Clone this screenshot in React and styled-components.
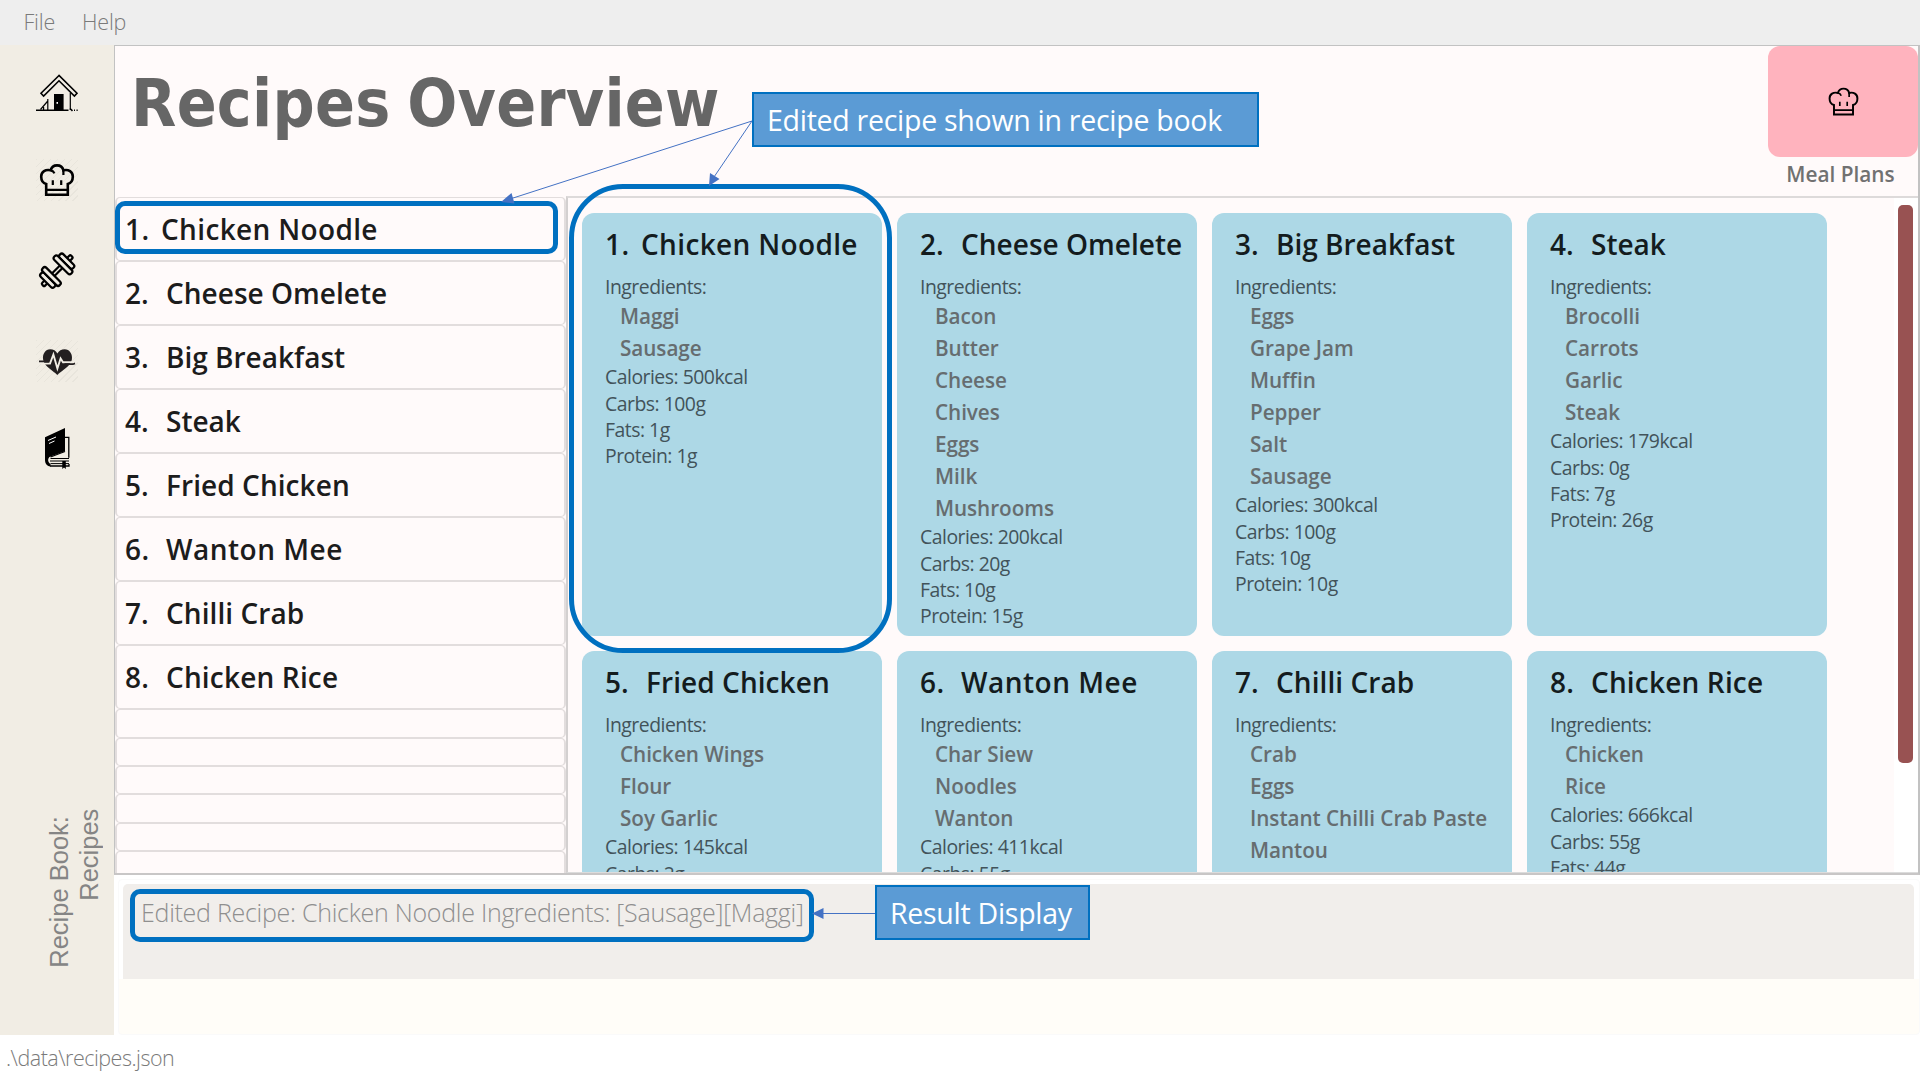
import React from "react";
import styled, { createGlobalStyle } from "styled-components";

const GlobalStyle = createGlobalStyle`
  * { box-sizing: border-box; }
  html, body { margin: 0; padding: 0; background: #fff; overflow: hidden; }
  body { font-family: "Open Sans", "Noto Sans", sans-serif; }
`;

const Window = styled.div`
  position: relative;
  display: flex;
  flex-direction: column;
  width: 1920px;
  height: 1080px;
  overflow: hidden;
  background: #fff;
`;

const MenuBar = styled.nav`
  display: flex;
  gap: 27px;
  height: 45px;
  padding-left: 23.5px;
  background: #eeeeee;
`;

const MenuItem = styled.span`
  font-size: 21.5px;
  font-weight: 300;
  line-height: 44px;
  letter-spacing: -0.2px;
  color: #7a7a7a;
`;

const Workspace = styled.div`
  display: flex;
  height: 990px;
`;

const Sidebar = styled.aside`
  display: flex;
  flex-direction: column;
  justify-content: space-between;
  width: 114px;
  padding: 24px 0 67px;
  background: #f1ede4;
`;

const NavIcons = styled.div`
  display: flex;
  flex-direction: column;
  gap: 48.3px;
  padding-left: 36px;
`;

const IconTile = styled.span`
  display: block;
  width: ${(p) => p.$size}px;
  height: ${(p) => p.$size}px;
  background: ${(p) =>
    p.$hatched
      ? "repeating-linear-gradient(135deg, rgba(0,0,0,0.035) 0 1px, transparent 1px 5px)"
      : "none"};

  svg {
    display: block;
    width: 100%;
    height: 100%;
    overflow: visible;
  }
`;

const SideCaption = styled.div`
  align-self: flex-start;
  margin-left: 44px;
  writing-mode: vertical-rl;
  transform: rotate(180deg);
  font-family: "Liberation Sans", Arial, sans-serif;
  font-size: 25.5px;
  line-height: 30px;
  text-align: right;
  white-space: pre;
  color: #858585;
`;

const Main = styled.main`
  display: flex;
  flex-direction: column;
  width: 1806px;
`;

const BookPanel = styled.section`
  display: flex;
  flex-direction: column;
  height: 830px;
  border: 1px solid #c2c2c2;
  border-right-width: 2px;
  border-bottom: 2px solid #c8c6c6;
  background: #fffafa;
`;

const Header = styled.header`
  display: flex;
  justify-content: space-between;
  height: 150px;
  padding-left: 16px;
`;

const Title = styled.h1`
  margin: 0;
  font-family: "DejaVu Sans Condensed", "DejaVu Sans", sans-serif;
  font-stretch: condensed;
  font-size: 65.5px;
  font-weight: 700;
  line-height: 114px;
  letter-spacing: 0.25px;
  word-spacing: -4px;
  color: #666;
`;

const PlansColumn = styled.div`
  display: flex;
  flex-direction: column;
  align-items: center;
  width: 150px;
`;

const PlansButton = styled.button`
  display: flex;
  align-items: center;
  justify-content: center;
  width: 150px;
  height: 111px;
  padding: 0;
  border: 0;
  border-radius: 12px;
  background: #ffb3be;
`;

const PlansLabel = styled.span`
  padding-right: 5px;
  font-size: 20.8px;
  font-weight: 600;
  line-height: 34px;
  color: #717171;
`;

const Columns = styled.div`
  display: flex;
  flex: 1;
  min-height: 0;
`;

const RecipeList = styled.div`
  width: 451px;
  height: 100%;
  padding-top: 0.5px;
  overflow: hidden;
`;

const ListCell = styled.div`
  display: flex;
  height: ${(p) => (p.$empty ? 28.4 : 64.1)}px;
  padding-left: 8px;
  border: 1px solid #e2dddd;
  border-width: 1.5px 2px;
  border-radius: 5px;
  font-size: 28px;
  font-weight: 600;
  line-height: 62.6px;
  letter-spacing: ${(p) => p.$tracking || 0}px;
  white-space: pre;
  color: #1c1c1c;
`;

const Index = styled.span`
  width: ${(p) => p.$width}px;
`;

const CardArea = styled.div`
  display: flex;
  flex: 1;
  justify-content: space-between;
  border-top: 2px solid #dddada;
  border-left: 2px solid #d3d0d0;
  border-bottom: 1px solid #dcdcdc;
  overflow: hidden;
`;

const CardGrid = styled.div`
  display: grid;
  grid-template-columns: repeat(4, 300px);
  grid-auto-rows: 422.5px;
  gap: 15.5px 15px;
  padding: 15px 0 0 14px;
`;

const Card = styled.article`
  padding: 11.4px 0 0 23px;
  border-radius: 12px;
  background: #add8e6;
  overflow: hidden;
  white-space: nowrap;
`;

const CardTitle = styled.h2`
  display: flex;
  margin: 0 0 10px;
  font-size: 28px;
  font-weight: 600;
  line-height: 40px;
  letter-spacing: ${(p) => p.$tracking}px;
  color: #141c1e;
`;

const Fact = styled.div`
  font-size: 19.4px;
  line-height: 26.1px;
  letter-spacing: -0.5px;
  color: #42535a;
`;

const Ingredient = styled.div`
  padding-left: 15px;
  font-size: 20.7px;
  font-weight: 600;
  line-height: 32px;
  letter-spacing: -0.05px;
  color: #666d70;
`;

const ScrollTrack = styled.div`
  width: 24px;
  padding: 7px 0 0 4px;
  background: #fff;
`;

const ScrollThumb = styled.div`
  width: 15px;
  height: 558px;
  border-radius: 5px;
  background: #985252;
`;

const ResultPanel = styled.section`
  height: 160px;
  padding: 4px 0 0 4px;
  background: #fff;
`;

const ResultFrame = styled.div`
  height: 156px;
  padding: 4px 5px 0 4px;
  border: 1px solid #fafafa;
  border-radius: 4px;
  background: linear-gradient(#fff 0 99px, #fffdf8 99px);
`;

const ResultBox = styled.div`
  height: 95px;
  padding: 10px 0 0 18px;
  border-radius: 5px 5px 0 0;
  background: #f1eeeb;
  font-size: 25px;
  font-weight: 300;
  line-height: 36px;
  letter-spacing: -0.27px;
  color: #8f8f8f;
`;

const StatusBar = styled.footer`
  height: 45px;
  padding-left: 6px;
  font-size: 21.5px;
  font-weight: 300;
  line-height: 46px;
  letter-spacing: -0.5px;
  color: #7a7a7a;
`;

const Overlay = styled.div`
  position: absolute;
  inset: 0;
  pointer-events: none;

  > svg {
    position: absolute;
    inset: 0;
  }
`;

const Outline = styled.div`
  position: absolute;
  left: ${(p) => p.$x}px;
  top: ${(p) => p.$y}px;
  width: ${(p) => p.$w}px;
  height: ${(p) => p.$h}px;
  border: 5px solid #0070c0;
  border-radius: ${(p) => p.$r}px;
`;

const Callout = styled.div`
  position: absolute;
  left: ${(p) => p.$x}px;
  top: ${(p) => p.$y}px;
  width: ${(p) => p.$w}px;
  height: 55px;
  padding-left: 13px;
  border: 2px solid #0070c0;
  background: #5b9bd5;
  font-size: 28.5px;
  line-height: 52px;
  letter-spacing: -0.27px;
  white-space: nowrap;
  color: #fff;
`;

const HouseIcon = () => (
  <svg viewBox="0 0 42 42" fill="none" stroke="#000" strokeWidth="1.6">
    <path d="M23 6.5 L5 24.3 L7.6 27 L23 11.8 L38.4 27 L41 24.3 Z" />
    <path d="M11.8 30 V41 M4.5 40.5 L11.8 32 M7.6 38 V41 M34.3 24 V41" strokeWidth="1.2" />
    <path d="M0 41.3 H32.5 M34 39.5 L36.5 41.8 M38 41.3 h1 M40.5 41.3 h1.2" />
    <rect x="18" y="25" width="9.6" height="16.5" fill="#000" stroke="none" />
    <rect x="20.5" y="33" width="1.5" height="1.8" fill="#fff" stroke="none" />
  </svg>
);

const ChefIcon = ({ weight = 2.6 }) => (
  <svg viewBox="0 0 42 42" fill="none" stroke="#000" strokeWidth={weight}>
    <path d="M10.2 35.8 V25 C6.5 24 5.2 20.5 5.2 17.5 C5.2 12.6 9.5 10 14.7 11.3 C15.6 8 18 6.4 21 6.4 C24 6.4 26.6 8 27.4 11.3 C32.5 10 36.8 12.6 36.8 17.5 C36.8 20.5 35.5 24 31.8 25 V35.8 Z" />
    <path d="M10.2 30.8 H31.8 M14.7 11.3 C16.3 11.6 17.8 12.6 18.4 14.4 M27.4 11 V16" strokeWidth={weight * 0.85} />
    <path d="M16.8 21.3 V26 M25.2 21.3 V26" strokeWidth={weight * 0.85} />
  </svg>
);

const DumbbellIcon = () => (
  <svg viewBox="0 0 42 42" fill="#f1ede4" stroke="#000" strokeWidth="2.2">
    <g transform="translate(21.2 20.7) rotate(-45)">
      <rect x="-20.5" y="-2" width="5" height="4" rx="1.4" />
      <rect x="15.5" y="-2" width="5" height="4" rx="1.4" />
      <rect x="-6" y="-1.8" width="12" height="3.6" />
      <rect x="-16" y="-9.5" width="5.2" height="19" rx="2.4" />
      <rect x="10.8" y="-9.5" width="5.2" height="19" rx="2.4" />
      <rect x="-10.8" y="-12" width="5.2" height="24" rx="2.4" />
      <rect x="5.6" y="-12" width="5.2" height="24" rx="2.4" />
    </g>
  </svg>
);

const HeartIcon = () => (
  <svg viewBox="0 0 42 42" fill="none">
    <path
      d="M21.3 35 C17 30.5 8.5 26.5 7.2 20 C6 14 9.5 9.2 14.2 9.2 C17.3 9.2 20 10.8 21.4 13.4 C22.8 10.8 25.5 9.2 28.7 9.2 C33.4 9.2 37 14 35.8 20 C34.3 26.5 25.6 30.5 21.3 35 Z"
      fill="#231f20"
    />
    <path d="M5 23.6 H14 L17.4 14.5 L21.4 28.5 L24.6 18.5 L27 22.2 H38" stroke="#f1ede4" strokeWidth="1.9" />
    <path d="M3 21.4 H12.6 M28.5 24.2 H37 L39 23.4" stroke="#231f20" strokeWidth="1.7" />
  </svg>
);

const BookIcon = () => (
  <svg viewBox="0 0 42 42" fill="none" stroke="#000" strokeWidth="1.3">
    <path d="M29 7.4 H32.8 V27.8 M14 36 H33 V34" />
    <path
      d="M9 7.2 L29 -2 V21.2 L14 26.8 C11.5 28 11.5 32.5 14.5 34 V36.6 C10.5 36 9 33 9 30 Z"
      fill="#000"
      stroke="none"
    />
    <path d="M14.5 28.5 H33 M14 31 H33 M14.5 33.6 H33" strokeWidth="1" />
    <path d="M29 21.5 L14.5 27" />
    <path d="M26.3 31 H29.8 V39 L28 37.4 L26.3 39 Z" fill="#000" stroke="none" />
    <path d="M12 10.5 L20 7 M13 13.5 L18.5 11" stroke="#fff" strokeWidth="1" />
  </svg>
);

const recipes = [
  { name: "Chicken Noodle", tracking: 0.35, items: ["Maggi", "Sausage"], facts: [500, 100, 1, 1] },
  {
    name: "Cheese Omelete",
    tracking: 0.02,
    items: ["Bacon", "Butter", "Cheese", "Chives", "Eggs", "Milk", "Mushrooms"],
    facts: [200, 20, 10, 15],
  },
  {
    name: "Big Breakfast",
    tracking: 0,
    items: ["Eggs", "Grape Jam", "Muffin", "Pepper", "Salt", "Sausage"],
    facts: [300, 100, 10, 10],
  },
  { name: "Steak", tracking: 0, items: ["Brocolli", "Carrots", "Garlic", "Steak"], facts: [179, 0, 7, 26] },
  { name: "Fried Chicken", tracking: 0.07, items: ["Chicken Wings", "Flour", "Soy Garlic"], facts: [145, 2] },
  { name: "Wanton Mee", tracking: 0.5, items: ["Char Siew", "Noodles", "Wanton"], facts: [411, 55] },
  {
    name: "Chilli Crab",
    tracking: 0.07,
    items: ["Crab", "Eggs", "Instant Chilli Crab Paste", "Mantou"],
    facts: [],
  },
  { name: "Chicken Rice", tracking: 0.17, items: ["Chicken", "Rice"], facts: [666, 55, 44] },
];

const factLabels = [
  ["Calories", "kcal"],
  ["Carbs", "g"],
  ["Fats", "g"],
  ["Protein", "g"],
];

const indexWidth = (i) => (i === 0 ? 36 : 41);

const RecipeCard = ({ recipe, i }) => (
  <Card>
    <CardTitle $tracking={recipe.tracking}>
      <Index $width={indexWidth(i)}>{i + 1}.</Index>
      {recipe.name}
    </CardTitle>
    <Fact>Ingredients:</Fact>
    {recipe.items.map((item) => (
      <Ingredient key={item}>{item}</Ingredient>
    ))}
    {recipe.facts.map((value, n) => (
      <Fact key={factLabels[n][0]}>
        {factLabels[n][0]}: {value}
        {factLabels[n][1]}
      </Fact>
    ))}
  </Card>
);

export default function App() {
  return (
    <Window>
      <GlobalStyle />
      <MenuBar>
        <MenuItem>File</MenuItem>
        <MenuItem>Help</MenuItem>
      </MenuBar>
      <Workspace>
        <Sidebar>
          <NavIcons>
            <IconTile $size={42}><HouseIcon /></IconTile>
            <IconTile $size={42} $hatched><ChefIcon /></IconTile>
            <IconTile $size={42}><DumbbellIcon /></IconTile>
            <IconTile $size={42} $hatched><HeartIcon /></IconTile>
            <IconTile $size={42}><BookIcon /></IconTile>
          </NavIcons>
          <SideCaption>{"Recipe Book: \nRecipes"}</SideCaption>
        </Sidebar>
        <Main>
          <BookPanel>
            <Header>
              <Title>Recipes Overview</Title>
              <PlansColumn>
                <PlansButton>
                  <IconTile $size={37}><ChefIcon weight={2.2} /></IconTile>
                </PlansButton>
                <PlansLabel>Meal Plans</PlansLabel>
              </PlansColumn>
            </Header>
            <Columns>
              <RecipeList>
                {recipes.map((r, i) => (
                  <ListCell key={r.name} $tracking={r.tracking}>
                    <Index $width={indexWidth(i)}>{i + 1}.</Index>
                    {r.name}
                  </ListCell>
                ))}
                {[0, 1, 2, 3, 4, 5].map((n) => (
                  <ListCell key={n} $empty />
                ))}
              </RecipeList>
              <CardArea>
                <CardGrid>
                  {recipes.map((r, i) => (
                    <RecipeCard key={r.name} recipe={r} i={i} />
                  ))}
                </CardGrid>
                <ScrollTrack>
                  <ScrollThumb />
                </ScrollTrack>
              </CardArea>
            </Columns>
          </BookPanel>
          <ResultPanel>
            <ResultFrame>
              <ResultBox>Edited Recipe: Chicken Noodle Ingredients: [Sausage][Maggi]</ResultBox>
            </ResultFrame>
          </ResultPanel>
        </Main>
      </Workspace>
      <StatusBar>.\data\recipes.json</StatusBar>
      <Overlay>
        <Outline $x={115} $y={201} $w={443} $h={53} $r={10} />
        <Outline $x={568.5} $y={184} $w={323} $h={469} $r={54} />
        <Outline $x={130} $y={889} $w={684} $h={53} $r={10} />
        <svg width="1920" height="1080" stroke="#4472c4" strokeWidth="1">
          <path d="M752 121 L510 199 M752 121 L714 177 M875 913.5 H822" fill="none" />
          <path
            d="M501 202 L511.5 193 L514.5 203.5 Z M709 186 L710 173 L719.5 179 Z M812 913.5 L823.5 908 V919 Z"
            fill="#4472c4"
            stroke="none"
          />
        </svg>
        <Callout $x={752} $y={92} $w={507}>Edited recipe shown in recipe book</Callout>
        <Callout $x={875} $y={885} $w={215}>Result Display</Callout>
      </Overlay>
    </Window>
  );
}
